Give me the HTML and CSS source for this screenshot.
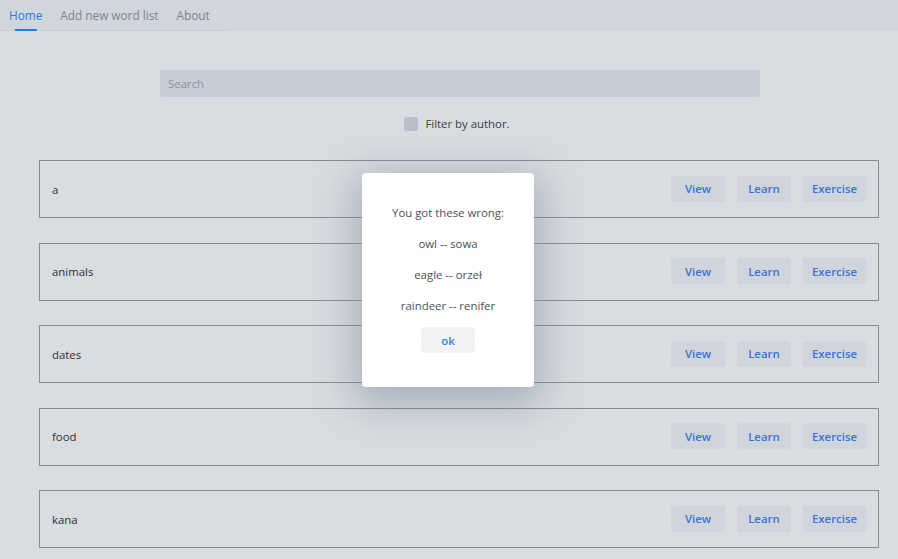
FILE: index.html
```html
<!DOCTYPE html>
<html>
<head>
<meta charset="utf-8">
<link rel="stylesheet" href="styles.css">
</head>
<body>
<nav class="nav">
  <div class="tabs">
    <a class="tab active">Home</a>
    <a class="tab">Add new word list</a>
    <a class="tab">About</a>
  </div>
</nav>
<main class="main">
  <div class="search-wrap"><input class="search" placeholder="Search"></div>
  <label class="filter"><span class="check"></span>Filter by author.</label>
  <div class="list">
    <div class="row"><span class="name">a</span><div class="actions"><button class="btn">View</button><button class="btn">Learn</button><button class="btn">Exercise</button></div></div>
    <div class="row"><span class="name">animals</span><div class="actions"><button class="btn">View</button><button class="btn">Learn</button><button class="btn">Exercise</button></div></div>
    <div class="row"><span class="name">dates</span><div class="actions"><button class="btn">View</button><button class="btn">Learn</button><button class="btn">Exercise</button></div></div>
    <div class="row"><span class="name">food</span><div class="actions"><button class="btn">View</button><button class="btn">Learn</button><button class="btn">Exercise</button></div></div>
    <div class="row"><span class="name">kana</span><div class="actions"><button class="btn">View</button><button class="btn">Learn</button><button class="btn">Exercise</button></div></div>
  </div>
</main>
<div class="modal">
  <p>You got these wrong:</p>
  <p>owl -- sowa</p>
  <p>eagle -- orzeł</p>
  <p>raindeer -- renifer</p>
  <button class="ok">ok</button>
</div>
</body>
</html>
```
FILE: styles.css
```css
* { box-sizing: border-box; }
html, body { margin: 0; height: 100%; }
body {
  background: #d9dde1;
  font-family: "Open Sans", "Noto Sans", sans-serif;
  font-size: 11.4px;
  color: #2f3338;
  overflow: hidden;
}
.nav {
  background: #d1d6dd;
  height: 31px;
}
.tabs {
  display: flex;
  width: 228px;
  height: 31px;
  border-bottom: 1px solid #c8ced6;
  padding-left: 9px;
  gap: 18px;
}
.tab {
  position: relative;
  font-size: 11.8px;
  color: #7b8390;
  line-height: 30px;
  white-space: nowrap;
}
.tab.active { color: #2a7be0; }
.tab.active::after {
  content: "";
  position: absolute;
  left: 6px;
  right: 5px;
  bottom: -1px;
  height: 2px;
  background: #2a7be0;
}
.main {
  margin-left: 39px;
  width: 840px;
  padding-top: 39px;
}
.search-wrap { display: flex; justify-content: center; padding-left: 2px; }
.search {
  width: 600px;
  height: 27px;
  border: none;
  border-radius: 3px;
  background: #c6cdd6;
  padding: 0 8px;
  font-family: inherit;
  font-size: 11.4px;
  color: #8a929d;
  outline: none;
}
.search::placeholder { color: #8a929d; }
.filter {
  display: flex;
  justify-content: center;
  align-items: center;
  gap: 7px;
  margin-top: 19px;
  margin-left: -4px;
  color: #3a3f45;
}
.check {
  width: 14px;
  height: 14px;
  background: #b9c0ca;
  border-radius: 3px;
}
.list {
  margin-top: 29px;
  display: flex;
  flex-direction: column;
  gap: 24.5px;
}
.row {
  height: 58px;
  border: 1px solid #888c91;
  display: flex;
  align-items: center;
  justify-content: space-between;
  padding: 0 12px;
}
.name { color: #2c3036; }
.actions { display: flex; gap: 12px; margin-top: -1px; }
.btn {
  height: 26px;
  padding: 0 9px;
  min-width: 54px;
  border: none;
  border-radius: 3px;
  background: #d0d5dc;
  color: #3a72d6;
  font-family: inherit;
  font-size: 11.4px;
  font-weight: 600;
}
.modal {
  position: absolute;
  left: 362px;
  top: 173px;
  width: 172px;
  height: 214px;
  background: #ffffff;
  border-radius: 4px;
  box-shadow: 0 10px 40px 8px rgba(120, 130, 150, 0.5);
  display: flex;
  flex-direction: column;
  align-items: center;
  padding-top: 31px;
  gap: 13px;
}
.modal p {
  margin: 0;
  line-height: 18px;
  color: #4b5058;
}
.ok {
  margin-top: -1px;
  width: 54px;
  height: 26px;
  border: none;
  border-radius: 3px;
  background: #f2f3f5;
  color: #2f7ee6;
  font-family: inherit;
  font-size: 11.4px;
  font-weight: 600;
}
```
